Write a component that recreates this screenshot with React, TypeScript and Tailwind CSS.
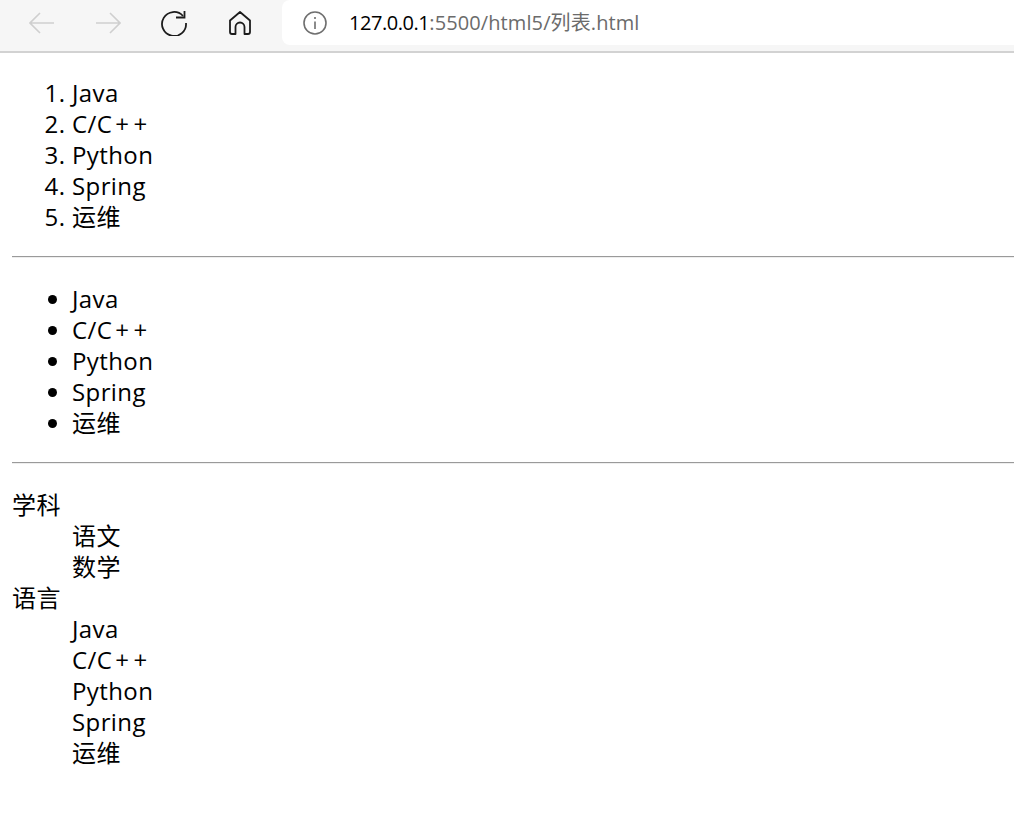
const items = ["Java", "C/C++", "Python", "Spring", "运维"];

function Label({ text }: { text: string }) {
  if (text === "C/C++") {
    return (
      <>
        C/C<span className="ml-[3px] tracking-[4.5px]">++</span>
      </>
    );
  }
  return <>{text}</>;
}

function Rows({ list }: { list: string[] }) {
  return (
    <>
      {list.map((t) => (
        <li key={t} className="h-[31px]">
          <Label text={t} />
        </li>
      ))}
    </>
  );
}

function Rule() {
  return <hr className="h-[2px] border-0 border-t border-t-[#9a9a9a] border-b border-b-[#eeeeee] box-border" />;
}

export default function App() {
  return (
    <div className="min-h-[815px] bg-white text-black font-['Open_Sans','Noto_Sans_CJK_SC',sans-serif] text-[24px] leading-[31px] tracking-[0.4px] overflow-hidden">
      <header className="h-[53px] bg-[#f6f6f6] border-b-2 border-[#d2d2d2] box-border flex items-start">
        <div className="w-[282px] h-[45px] flex items-center shrink-0">
          <svg className="ml-[29px]" width="26" height="24" viewBox="0 0 26 24" fill="none" stroke="#cfcfcf" strokeWidth="1.6">
            <path d="M1 12H25M11 2L1 12L11 22" />
          </svg>
          <svg className="ml-[40px]" width="26" height="24" viewBox="0 0 26 24" fill="none" stroke="#cfcfcf" strokeWidth="1.6">
            <path d="M1 12H25M15 2L25 12L15 22" />
          </svg>
          <svg className="ml-[40px]" width="26" height="26" viewBox="0 0 26 26" fill="none" stroke="#1c1c1c" strokeWidth="1.8">
            <path d="M22 6A12 12 0 1 0 25 13" />
            <path d="M15 7.5H23.5V1" />
          </svg>
          <svg className="ml-[41px]" width="24" height="26" viewBox="0 0 24 26" fill="none" stroke="#1c1c1c" strokeWidth="1.8" strokeLinejoin="round">
            <path d="M12 2L2 10.5V22A2 2 0 0 0 4 24H7.5V17A4.5 4.5 0 0 1 16.5 17V24H20A2 2 0 0 0 22 22V10.5Z" />
          </svg>
        </div>
        <div className="w-[732px] h-[45px] bg-white rounded-l-[8px] flex items-center">
          <svg className="ml-[21px]" width="24" height="24" viewBox="0 0 24 24" fill="none" stroke="#6f6f6f" strokeWidth="1.6">
            <circle cx="12" cy="12" r="11" />
            <path d="M12 10.5V18M12 6V8" />
          </svg>
          <span className="ml-[22px] text-[20px] leading-[26px] tracking-[0.1px] text-[#6b6b6b]">
            <span className="text-black tracking-[-0.45px]">127.0.0.1</span>:5500/html5/列表.html
          </span>
        </div>
      </header>
      <main className="pl-[12px]">
        <ol className="list-decimal pl-[60px] pt-[24px] pb-[24px]">
          <Rows list={items} />
        </ol>
        <Rule />
        <ul className="list-disc pl-[60px] pt-[25px] pb-[24px]">
          <Rows list={items} />
        </ul>
        <Rule />
        <dl className="pt-[25px]">
          <dt className="h-[31px]">学科</dt>
          <dd className="h-[31px] pl-[60px]">语文</dd>
          <dd className="h-[31px] pl-[60px]">数学</dd>
          <dt className="h-[31px]">语言</dt>
          {items.map((t) => (
            <dd key={t} className="h-[31px] pl-[60px]">
              <Label text={t} />
            </dd>
          ))}
        </dl>
      </main>
    </div>
  );
}
